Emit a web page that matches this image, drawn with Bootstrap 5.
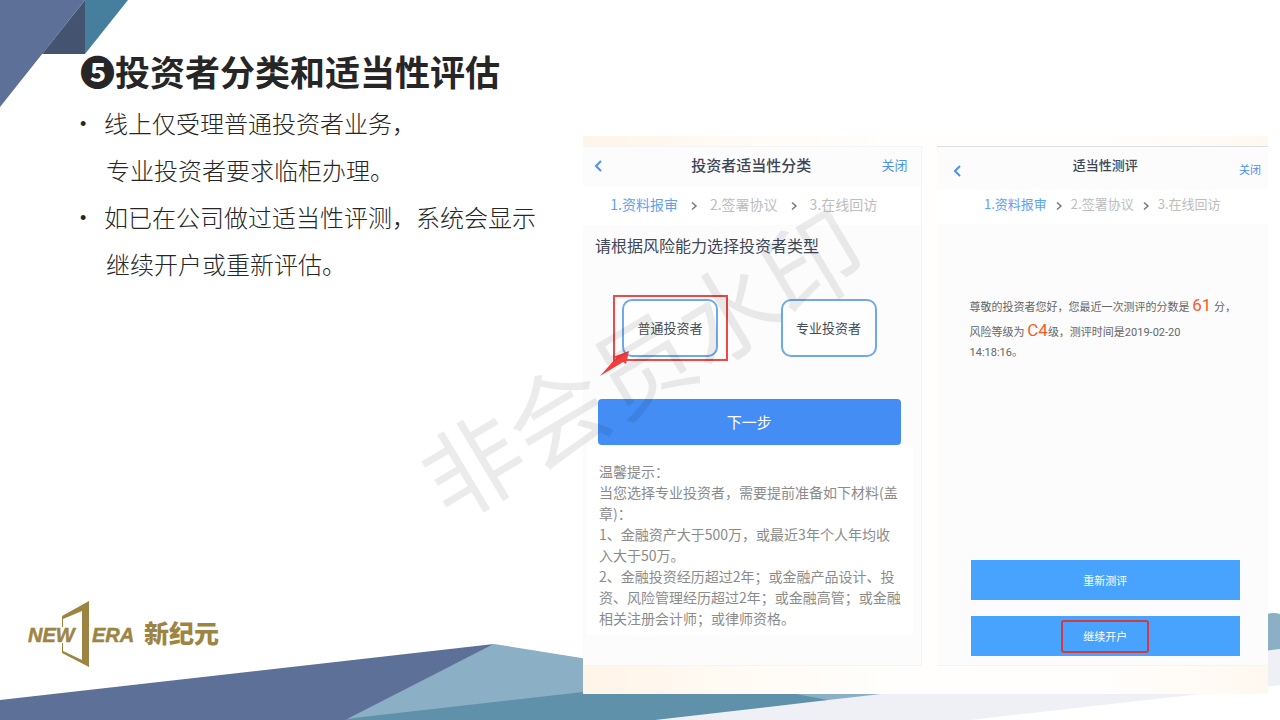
<!DOCTYPE html>
<html lang="zh-CN">
<head>
<meta charset="utf-8">
<meta name="viewport" content="width=device-width, initial-scale=1">
<title>投资者分类和适当性评估</title>
<link href="https://cdn.jsdelivr.net/npm/bootstrap@5.3.0/dist/css/bootstrap.min.css" rel="stylesheet">
<style>
body{font-family:"Noto Sans CJK SC",sans-serif;color:#262626;background:#fff}
.slide{min-height:100vh;overflow:hidden;isolation:isolate}
.deco-top{z-index:-1;width:128px;height:107px}
.deco-bottom{z-index:-1;width:100%;height:120px}
.side{width:45.55%}
.copy{padding:47px 0 0 80px}
.slide-title{font-size:35px;line-height:48px;font-weight:700;margin-bottom:4px;margin-right:-40px}
.points{font-size:24px;line-height:47px;font-weight:300;list-style:none}
.points li{padding-left:24px}
.points li::before{content:"•";position:absolute;left:0;top:2px;font-family:"Liberation Sans",sans-serif;font-size:18px}
.points .cont{display:block;padding-left:2px}
.logo{width:200px;height:68px;margin:0 0 52px 24px}
.shots{gap:15px;margin-top:136px;margin-right:12px;margin-bottom:24px;padding:10px 0 28px;background:linear-gradient(90deg,#fff4e8,#fffaf3 20%,#fffefc 45%,#fffefd 75%,#fff8f0)}
.phone{background:#fcfcfc;border:1px solid #f3f4f6;border-left:0}
.phone-a{flex:338 1 0}
.phone-b{flex:332 1 0;border-right:0;border-top-color:#dcdee2}
.bar{height:40px;color:#3c4658}
.bar a{color:#4a90f5;text-decoration:none;line-height:20px}
.bar h2{font-size:15px;line-height:20px;font-weight:500;margin:0}
.phone-a .bar{padding:0 13px 4px 8px;font-size:13px}
.steps{background:#fff;height:38px;font-size:14px;color:#bdbdbd;list-style:none;margin:0;gap:12px;padding:0 16px 4px 0}
.steps .on{color:#5da2f8}
.ask{font-size:16px;line-height:24px;color:#3f4757;margin:8px 0 0 12px}
.choices{margin:38px 44px 0 12px}
.pick{width:96px;height:58px;border:2px solid #6ea8ee;border-radius:10px;background:#fefefe;font-size:13px;color:#444b57;padding:0}
.ring{border:2px solid #ee4848;padding:2px 8px 2px 7px;margin-left:18px}
.arrow{left:-16px;bottom:-18px;width:34px;height:28px}
.go{padding:38px 20px 0 15px}
.next{background:#438df5;color:#fff;font-size:15px;height:46px;border-radius:4px;border:0}
.tips{background:#fff;margin:0 8px 30px 4px;padding:16px 0 6px 12px;font-size:14px;line-height:21px;color:#8b8b8b;white-space:nowrap}
.phone-b .bar{height:43px;padding:0 7px 0 15px}
.phone-b h2{font-size:13px;padding:0 0 8px 8px}
.phone-b .bar a{font-size:11px}
.phone-b .steps{font-size:13px;height:34px;gap:8px;padding:0 0 6px}
.result{font-size:11px;line-height:19px;color:#666;margin:69px 0 0 33px;font-family:Roboto,"Noto Sans CJK SC",sans-serif}
.result strong{color:#fa5a28;font-size:17px;font-weight:400;line-height:25px}
.actions{padding:0 28px 9px 34px}
.flat{background:#48a3ff;color:#fff;height:40px;border:0;font-size:11px}
.flat span{display:inline-block;width:88px;line-height:29px;border:2px solid transparent;border-radius:3px}
.flat .hot{border-color:#d23a41}
.watermark{left:50%;top:50%;font-size:99px;line-height:1;white-space:nowrap;color:rgba(0,0,0,.08);transform:translate(-50%,-50%) rotate(-31deg);pointer-events:none}
</style>
</head>
<body>
<main class="slide position-relative d-flex">
  <svg class="deco-top position-absolute top-0 start-0" viewBox="0 0 128 107" aria-hidden="true">
    <path d="M85 0H128L85 54z" fill="#457f9d"/><path d="M85 0V54H42z" fill="#445470"/><path d="M0 0H85L0 107z" fill="#5c7098"/>
  </svg>
  <svg class="deco-bottom position-absolute bottom-0 start-0" viewBox="0 0 1280 120" preserveAspectRatio="none" aria-hidden="true">
    <path d="M600 120L880 94L1280 49V85L970 120z" fill="#eff0f6"/>
    <path d="M494 44L793 92L828 100L345 119z" fill="#8bafc4"/>
    <path d="M700 78L780 99L828 100L1280 49V14Q1273 11 1260 16V45z" fill="#8bafc4"/>
    <path d="M345 119L583 92L785 92L828 100L655 120H345z" fill="#5f91ab"/>
    <path d="M0 100L494 44L345 120H0z" fill="#5c7098"/>
  </svg>

  <div class="row g-0 flex-grow-1 w-100">
    <section class="side d-flex flex-column justify-content-between">
      <div class="copy">
        <h1 class="slide-title">❺投资者分类和适当性评估</h1>
        <ul class="points ps-0 mb-0 text-nowrap">
          <li class="position-relative">线上仅受理普通投资者业务，<span class="cont">专业投资者要求临柜办理。</span></li>
          <li class="position-relative">如已在公司做过适当性评测，系统会显示<span class="cont">继续开户或重新评估。</span></li>
        </ul>
      </div>
      <svg class="logo" viewBox="0 0 200 68" role="img" aria-label="NEW ERA 新纪元" fill="#9d8442">
        <path d="M65 1V67L38 53V43H39V51L58 60V11L39 19V27H38V16z"/>
        <g font-family="Liberation Sans, sans-serif" font-weight="700" font-style="italic" font-size="20" stroke="#9d8442" stroke-width=".5">
          <text x="4" y="42">NEW</text><text x="68" y="42">ERA</text>
        </g>
        <text x="120" y="43" font-size="25" font-family="Noto Sans CJK SC, sans-serif" font-weight="900">新纪元</text>
      </svg>
    </section>

    <section class="col">
      <div class="shots d-flex">
        <article class="phone phone-a">
          <header class="bar d-flex align-items-center justify-content-between">
            <a href="#" aria-label="返回" class="pe-3"><svg width="14" height="14" viewBox="0 0 14 14" fill="none" stroke="currentColor" stroke-width="2"><path d="M10 2L5 7L10 12"/></svg></a>
            <h2>投资者适当性分类</h2>
            <a href="#">关闭</a>
          </header>
          <ol class="steps d-flex justify-content-center align-items-center">
            <li class="on">1.资料报审</li><li><svg width="8" height="10" viewBox="0 0 8 10" fill="none" stroke="#777" stroke-width="1.5"><path d="M2 1.500L6 5L2 8.500"/></svg></li>
            <li>2.签署协议</li><li><svg width="8" height="10" viewBox="0 0 8 10" fill="none" stroke="#777" stroke-width="1.5"><path d="M2 1.500L6 5L2 8.500"/></svg></li>
            <li>3.在线回访</li>
          </ol>
          <p class="ask">请根据风险能力选择投资者类型</p>
          <div class="choices d-flex justify-content-between align-items-center">
            <div class="ring position-relative">
              <button class="pick d-block" type="button">普通投资者</button>
              <svg class="arrow position-absolute" viewBox="0 0 34 28" fill="#f53b3b" aria-hidden="true"><path d="M1 27L17 9L14 8L30 2L27 15L24 13z"/></svg>
            </div>
            <button class="pick" type="button">专业投资者</button>
          </div>
          <div class="go"><button class="next w-100 d-block" type="button">下一步</button></div>
          <div class="tips">温馨提示：<br>当您选择专业投资者，需要提前准备如下材料(盖<br>章)：<br>1、金融资产大于500万，或最近3年个人年均收<br>入大于50万。<br>2、金融投资经历超过2年；或金融产品设计、投<br>资、风险管理经历超过2年；或金融高管；或金融<br>相关注册会计师；或律师资格。</div>
        </article>

        <article class="phone phone-b d-flex flex-column">
          <header class="bar d-flex align-items-center justify-content-between">
            <a href="#" aria-label="返回"><svg width="12" height="14" viewBox="0 0 12 14" fill="none" stroke="currentColor" stroke-width="2"><path d="M8 2L3 7L8 12"/></svg></a>
            <h2>适当性测评</h2>
            <a href="#">关闭</a>
          </header>
          <ol class="steps d-flex justify-content-center align-items-center">
            <li class="on">1.资料报审</li><li><svg width="8" height="10" viewBox="0 0 8 10" fill="none" stroke="#777" stroke-width="1.5"><path d="M2 1.500L6 5L2 8.500"/></svg></li>
            <li>2.签署协议</li><li><svg width="8" height="10" viewBox="0 0 8 10" fill="none" stroke="#777" stroke-width="1.5"><path d="M2 1.500L6 5L2 8.500"/></svg></li>
            <li>3.在线回访</li>
          </ol>
          <p class="result text-nowrap">尊敬的投资者您好，您最近一次测评的分数是 <strong>61</strong> 分，<br>风险等级为 <strong>C4</strong>级，测评时间是2019-02-20<br>14:18:16。</p>
          <div class="actions mt-auto d-grid gap-3">
            <button class="flat" type="button"><span>重新测评</span></button>
            <button class="flat" type="button"><span class="hot">继续开户</span></button>
          </div>
        </article>
      </div>
    </section>
  </div>
  <div class="watermark position-absolute">非会员水印</div>
</main>
<script src="https://cdn.jsdelivr.net/npm/bootstrap@5.3.0/dist/js/bootstrap.bundle.min.js"></script>
</body>
</html>
